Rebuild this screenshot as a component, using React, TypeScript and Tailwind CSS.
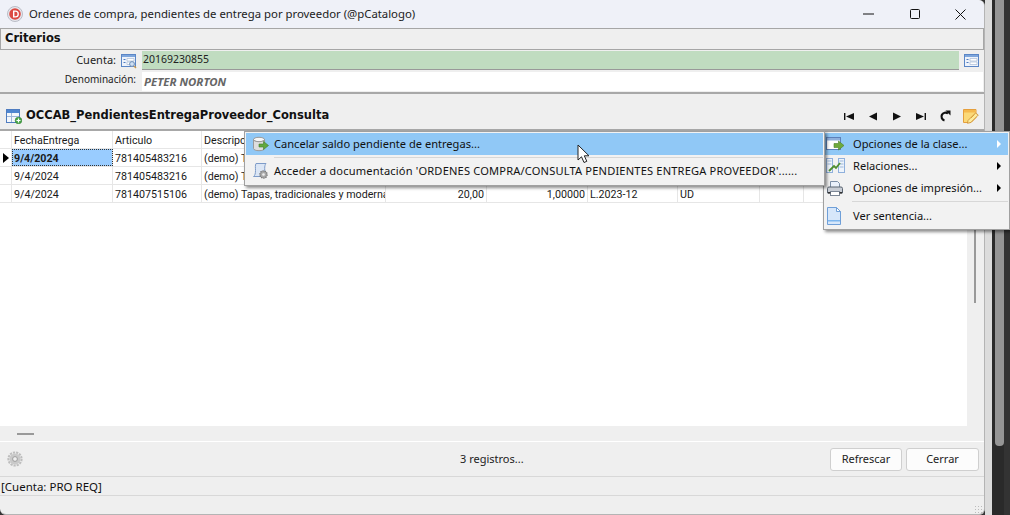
import React from "react";

const F = "font-['Noto_Sans',sans-serif]";

function AppLogo() {
  return (
    <svg width="16" height="16" viewBox="0 0 16 16">
      <circle cx="8" cy="8" r="7.500" fill="#e8e8ee" stroke="#b9bcc6" />
      <circle cx="8" cy="8" r="5.800" fill="#dc4a42" />
      <path d="M6 4.500h2.400a3.500 3.500 0 0 1 0 7H6z M7.400 5.800v4.400h1a2.200 2.200 0 0 0 0-4.400z" fill="#fff" fillRule="evenodd" />
    </svg>
  );
}

function FormIcon({ lens }: { lens?: boolean }) {
  return (
    <svg width="16" height="16" viewBox="0 0 16 16">
      <rect x="0.500" y="1.500" width="14" height="12" fill="#eef3fb" stroke="#5b86c6" />
      <rect x="1" y="2" width="13" height="2" fill="#7ea6dc" />
      <path d="M2.500 6.500h2M2.500 9.500h2" stroke="#4f7cc0" />
      <path d="M6 5.500h7v2.500H6zM6 9h7v2.500H6z" fill="#fff" stroke="#a9bcd6" strokeWidth="0.700" />
      {lens && <circle cx="11" cy="11" r="2.400" fill="#cfe0f4" stroke="#6f8fb8" />}
      {lens && <path d="M13 13l2 2" stroke="#c89a50" strokeWidth="1.500" />}
    </svg>
  );
}

function TableAddIcon() {
  return (
    <svg width="16" height="16" viewBox="0 0 16 16">
      <rect x="0.500" y="1.500" width="13" height="13" fill="#f4f7fb" stroke="#4f7cc0" />
      <rect x="1" y="2" width="12" height="3" fill="#4f86d0" />
      <path d="M5.500 5v9M1 8.500h12" stroke="#9db7da" />
      <circle cx="12.500" cy="12.500" r="3.300" fill="#4aa84a" stroke="#2f7d33" strokeWidth="0.600" />
      <path d="M12.500 10.500v4M10.500 12.500h4" stroke="#fff" strokeWidth="1.200" />
    </svg>
  );
}

function NavIcon({ kind }: { kind: "first" | "prev" | "next" | "last" }) {
  return (
    <svg width="12" height="9" viewBox="0 0 12 9" fill="#111">
      {kind === "first" && <path d="M1 1h1.400v7H1zM11 1v7L3 4.500z" />}
      {kind === "prev" && <path d="M10 0.500v8L2 4.500z" />}
      {kind === "next" && <path d="M2 0.500v8l8-4z" />}
      {kind === "last" && <path d="M9.600 1H11v7H9.600zM1 1v7l8-3.500z" />}
    </svg>
  );
}

function RedoIcon() {
  return (
    <svg width="12" height="12" viewBox="0 0 12 12" fill="none">
      <path d="M9 3.500A4 4 0 1 0 5.500 10.500" stroke="#111" strokeWidth="2.200" />
      <path d="M6.500 0.500h5v5z" fill="#111" />
    </svg>
  );
}

function NoteEditIcon() {
  return (
    <svg width="16" height="16" viewBox="0 0 16 16">
      <path d="M0.500 1.500h12.500v8l-5 5H0.500z" fill="#fbd978" stroke="#e59f3c" />
      <rect x="1" y="2" width="11.500" height="2.500" fill="#f5b94e" />
      <path d="M5 12.500l7.500-7.500 2.800 2-7.500 7.500-3.300.8z" fill="#fdeb9c" stroke="#c98a30" strokeWidth="0.800" />
      <path d="M8 10l3.500-3.500" stroke="#d9a040" />
    </svg>
  );
}

function DbArrowIcon() {
  return (
    <svg width="17" height="17" viewBox="0 0 17 17">
      <ellipse cx="7" cy="3.500" rx="5.500" ry="2.200" fill="#f7f7f7" stroke="#9a9a9a" />
      <path d="M1.500 3.500v9c0 1.300 2.500 2.200 5.500 2.200s5.500-.9 5.500-2.200v-9c0 1.300-2.500 2.200-5.500 2.200S1.500 4.800 1.500 3.500z" fill="#dedede" stroke="#9a9a9a" />
      <path d="M7 8h4.500V5.500l5 4-5 4V11H7z" fill="#62a83f" stroke="#3f7d2a" strokeWidth="0.600" />
    </svg>
  );
}

function ScrollGearIcon() {
  return (
    <svg width="18" height="18" viewBox="0 0 18 18">
      <path d="M5 1.500h10c-1 1-1.300 3-1.300 5 0 3 .3 6 0 8H2.500c1.500-1 2-3 2-6s-.5-5 .5-7z" fill="#dbe6f5" stroke="#7d9bc8" />
      <circle cx="12.500" cy="12.500" r="3.600" fill="#a8a8a8" stroke="#777" strokeDasharray="1.400 0.800" strokeWidth="1.400" />
      <circle cx="12.500" cy="12.500" r="1.300" fill="#eee" />
    </svg>
  );
}

function WindowArrowIcon() {
  return (
    <svg width="19" height="17" viewBox="0 0 19 17">
      <rect x="0.500" y="1.500" width="14" height="12" fill="#fff" stroke="#5d80b8" />
      <rect x="1" y="2" width="13" height="2.500" fill="#8fb0dc" />
      <path d="M8 7.500h4.500V5l5.500 4.500-5.500 4.500v-2.500H8z" fill="#6eaa3c" stroke="#4a8028" strokeWidth="0.600" />
    </svg>
  );
}

function RelationsIcon() {
  return (
    <svg width="19" height="16" viewBox="0 0 19 16">
      <rect x="0.500" y="0.500" width="6" height="14" fill="#eef4fb" stroke="#8fb0dc" />
      <rect x="12.500" y="0.500" width="6" height="14" fill="#eef4fb" stroke="#8fb0dc" />
      <path d="M1.500 3h4M1.500 6h4M13.500 3h4M13.500 6h4M13.500 9h4" stroke="#9db7da" />
      <path d="M3 13l5-5 2 2 4-5" fill="none" stroke="#4f8f30" strokeWidth="1.800" />
    </svg>
  );
}

function PrinterIcon() {
  return (
    <svg width="18" height="17" viewBox="0 0 18 17">
      <path d="M4.500 7V1.500h7l2 2V7" fill="#eaf1fb" stroke="#7c8ea6" />
      <path d="M1.500 13V8.500a1.500 1.500 0 0 1 1.500-1.500h12a1.500 1.500 0 0 1 1.500 1.500V13z" fill="#c7ccd4" stroke="#5a6470" />
      <rect x="4.500" y="11.500" width="9" height="4" fill="#fff" stroke="#7c8796" />
      <rect x="2" y="12" width="2.500" height="1.500" fill="#333" />
      <rect x="13.500" y="12" width="2.500" height="1.500" fill="#333" />
    </svg>
  );
}

function DocIcon() {
  return (
    <svg width="16" height="18" viewBox="0 0 16 18">
      <path d="M1.500 0.500h9l4 4v13h-13z" fill="#d7e7fa" stroke="#6f9fd8" />
      <path d="M10.500 0.500v4h4z" fill="#fff" stroke="#6f9fd8" />
      <path d="M2 13h12v1.500H2z" fill="#7db6ee" />
    </svg>
  );
}

function GearIcon() {
  return (
    <svg width="16" height="16" viewBox="0 0 16 16">
      <circle cx="8" cy="8" r="5.500" fill="#c9c9c9" />
      <circle cx="8" cy="8" r="6.600" fill="none" stroke="#bdbdbd" strokeWidth="2" strokeDasharray="2.200 1" />
      <circle cx="8" cy="8" r="2.400" fill="#efefef" stroke="#9d9d9d" />
    </svg>
  );
}

function CursorIcon() {
  return (
    <svg width="14" height="20" viewBox="0 0 14 20">
      <path d="M1 1v15l3.500-3.200 2.500 5.700 2.800-1.200-2.500-5.500H12z" fill="#fff" stroke="#222" strokeWidth="1" />
    </svg>
  );
}

const cols = ["w-[101px]", "w-[89px]", "w-[184px]", "w-[101px]", "w-[101px]", "w-[90px]", "w-[82px]", "w-[44px]"];

function Cell({ w, children, right, className = "" }: { w: string; children?: React.ReactNode; right?: boolean; className?: string }) {
  return (
    <div className={`${w} shrink-0 h-full border-r border-[#e6e6e6] px-[2px] overflow-hidden whitespace-nowrap leading-[19px] ${right ? "text-right" : ""} ${className}`}>
      {children}
    </div>
  );
}

const rows = [
  ["9/4/2024", "781405483216", "(demo) Tapas, tradicionales y modernas", "", "", "", ""],
  ["9/4/2024", "781405483216", "(demo) Tapas, tradicionales y modernas", "", "", "", ""],
  ["9/4/2024", "781407515106", "(demo) Tapas, tradicionales y modernas", "20,00", "1,00000", "L.2023-12", "UD"],
];

function Grid() {
  return (
    <div className="flex-1 flex min-h-0 border-t-2 border-[#a8a8a8]">
      <div className="flex-1 bg-white text-[10.700px] text-[#1a1a1a] font-['Roboto',sans-serif]">
        <div className="flex h-[18px] border-b border-[#e6e6e6]">
          <div className="w-[12px] shrink-0 border-r border-[#e6e6e6]" />
          <Cell w={cols[0]}>FechaEntrega</Cell>
          <Cell w={cols[1]}>Articulo</Cell>
          <Cell w={cols[2]}>Descripcion</Cell>
          <Cell w={cols[3]} />
          <Cell w={cols[4]} />
          <Cell w={cols[5]} />
          <Cell w={cols[6]} />
          <Cell w={cols[7]} />
        </div>
        {rows.map((r, i) => (
          <div key={i} className="flex h-[18px] border-b border-[#e6e6e6]">
            <div className="w-[12px] shrink-0 border-r border-[#e6e6e6] flex items-center justify-center">
              {i === 0 && <div className="w-0 h-0 border-y-[5px] border-y-transparent border-l-[6px] border-l-black" />}
            </div>
            <Cell w={cols[0]} className={i === 0 ? "bg-[#99ccff] font-bold outline-1 outline-dotted outline-[#333] -outline-offset-1" : ""}>{r[0]}</Cell>
            <Cell w={cols[1]}>{r[1]}</Cell>
            <Cell w={cols[2]}>{r[2]}</Cell>
            <Cell w={cols[3]} right>{r[3]}</Cell>
            <Cell w={cols[4]} right>{r[4]}</Cell>
            <Cell w={cols[5]}>{r[5]}</Cell>
            <Cell w={cols[6]}>{r[6]}</Cell>
            <Cell w={cols[7]} />
          </div>
        ))}
      </div>
      <div className="w-[17px] shrink-0 bg-[#efefef] pl-[7px]">
        <div className="w-[2px] h-[172px] bg-[#999]" />
      </div>
    </div>
  );
}

function MenuLeft() {
  return (
    <div className="absolute left-[244px] top-[131px] w-[581px] h-[55px] bg-[#f2f2f2] border border-[#a0a0a0] shadow-[2px_2px_3px_rgba(0,0,0,0.45)] px-[1px] pt-[1px] text-[11.100px] text-[#111] whitespace-nowrap">
      <div className="h-[22px] bg-[#90c8f6] flex items-center pl-[6px] gap-[5px]">
        <DbArrowIcon />
        <span>Cancelar saldo pendiente de entregas...</span>
      </div>
      <div className="h-[1px] mt-[2px] ml-[28px] bg-[#d7d7d7]" />
      <div className="h-[26px] flex items-center pl-[5px] gap-[5px]">
        <ScrollGearIcon />
        <span className="tracking-[0.170px]">Acceder a documentación 'ORDENES COMPRA/CONSULTA PENDIENTES ENTREGA PROVEEDOR'......</span>
      </div>
    </div>
  );
}

function MenuItem({ icon, label, active, arrow }: { icon: React.ReactNode; label: string; active?: boolean; arrow?: boolean }) {
  return (
    <div className={`h-[22px] flex items-center pl-[1px] pr-[7px] ${active ? "bg-[#90c8f6]" : ""}`}>
      <div className="w-[27px] shrink-0 flex items-center">{icon}</div>
      <span className="flex-1">{label}</span>
      {arrow && <div className={`w-0 h-0 border-y-[4px] border-y-transparent border-l-[4px] ${active ? "border-l-white" : "border-l-black"}`} />}
    </div>
  );
}

function MenuRight() {
  return (
    <div className="absolute left-[823px] top-[131px] w-[187px] h-[99px] bg-[#f2f2f2] border border-[#a0a0a0] shadow-[2px_2px_3px_rgba(0,0,0,0.45)] px-[1px] pt-[1px] text-[11.100px] text-[#111] whitespace-nowrap">
      <MenuItem icon={<WindowArrowIcon />} label="Opciones de la clase..." active arrow />
      <MenuItem icon={<RelationsIcon />} label="Relaciones..." arrow />
      <MenuItem icon={<PrinterIcon />} label="Opciones de impresión..." arrow />
      <div className="h-[1px] mt-[2px] mb-[3px] ml-[27px] bg-[#d7d7d7]" />
      <MenuItem icon={<DocIcon />} label="Ver sentencia..." />
    </div>
  );
}

export default function App() {
  return (
    <div className={`relative w-[1010px] h-[515px] overflow-hidden flex bg-[#333] ${F}`}>
      <div className="w-[985px] h-[515px] shrink-0 flex flex-col bg-[#efefef] rounded-b-[6px] rounded-tr-[6px] border-r border-b border-[#b4b4b4]">
        {/* title */}
        <div className="h-[28px] shrink-0 bg-[#eff1f8] rounded-tr-[6px] flex items-center pl-[7px] text-[11.350px] text-[#222] whitespace-nowrap">
          <AppLogo />
          <span className="ml-[6px]">Ordenes de compra, pendientes de entrega por proveedor (@pCatalogo)</span>
          <div className="ml-auto flex items-center">
            <svg className="mr-[36px]" width="11" height="2" viewBox="0 0 11 2"><path d="M0 1h11" stroke="#111" /></svg>
            <svg className="mr-[35px]" width="10" height="10" viewBox="0 0 10 10"><rect x="0.500" y="0.500" width="9" height="9" rx="1" fill="none" stroke="#111" /></svg>
            <svg className="mr-[18px]" width="11" height="11" viewBox="0 0 11 11"><path d="M0.500 0.500l10 10M10.500 0.500l-10 10" stroke="#111" /></svg>
          </div>
        </div>
        {/* Criterios */}
        <div className="h-[22px] shrink-0 bg-[#efefef] border border-[#a6a6a6] flex items-center pl-[4px] text-[11.500px] font-bold text-[#111] font-['DejaVu_Sans',sans-serif]">Criterios</div>
        {/* form */}
        <div className="h-[44px] shrink-0 border-b-2 border-[#a8a8a8] text-[#222] pt-[1px]">
          <div className="h-[19px] flex items-center">
            <div className="w-[116px] text-right shrink-0 text-[11px]">Cuenta:</div>
            <div className="w-[26px] shrink-0 flex justify-center"><FormIcon lens /></div>
            <div className="w-[817px] h-[19px] bg-[#c0dcc0] border-b border-[#999] leading-[17px] pl-[1px] text-[10.500px]">20169230855</div>
            <div className="ml-[5px]"><FormIcon /></div>
          </div>
          <div className="h-[20px] mt-[1px] flex items-center">
            <div className="w-[136px] text-right shrink-0 pb-[3px] text-[10px]">Denominación:</div>
            <div className="ml-[6px] w-[841px] h-[19px] bg-white pl-[2px] leading-[19px] text-[11.400px] font-bold italic text-[#666]">PETER NORTON</div>
          </div>
        </div>
        {/* grid title */}
        <div className="h-[35px] shrink-0 flex items-center pl-[6px] pt-[9px]">
          <TableAddIcon />
          <span className="ml-[4px] text-[11.500px] font-bold text-[#111] font-['DejaVu_Sans',sans-serif] whitespace-nowrap">OCCAB_PendientesEntregaProveedor_Consulta</span>
          <div className="ml-auto flex items-center gap-[12px] pr-[5px]">
            <NavIcon kind="first" />
            <NavIcon kind="prev" />
            <NavIcon kind="next" />
            <NavIcon kind="last" />
            <RedoIcon />
            <NoteEditIcon />
          </div>
        </div>
        <Grid />
        {/* splitter */}
        <div className="h-[16px] shrink-0 border-b border-white flex items-center pl-[17px]">
          <div className="w-[17px] h-[2px] bg-[#999]" />
        </div>
        {/* footer */}
        <div className="h-[35px] shrink-0 border-b border-[#d8d8d8] flex items-center pl-[7px] pr-[5px] text-[11px] text-[#222]">
          <GearIcon />
          <span className="ml-[437px]">3 registros...</span>
          <div className="ml-auto flex gap-[4px]">
            <button className="w-[72px] h-[23px] bg-[#fcfcfc] border border-[#cfcfcf] rounded-[3px]">Refrescar</button>
            <button className="w-[73px] h-[23px] bg-[#fcfcfc] border border-[#cfcfcf] rounded-[3px]">Cerrar</button>
          </div>
        </div>
        {/* status */}
        <div className="h-[19px] shrink-0 border-b border-[#d8d8d8] pl-[1px] text-[11.500px] leading-[20px] text-[#111]">[Cuenta: PRO REQ]</div>
        <div className="h-[18px] shrink-0 flex justify-end items-end pr-[2px] pb-[1px]">
          <div className="w-[8px] h-[8px] bg-[radial-gradient(#bbb_1px,transparent_1px)] bg-[length:3px_3px]" />
        </div>
      </div>
      {/* desktop strip */}
      <div className="w-[7px] shrink-0 bg-[#dcdcdc]" />
      <div className="w-[3px] shrink-0 bg-[#2a2a2a]" />
      <div className="w-[9px] shrink-0 h-full bg-[#2a2a2a]">
        <div className="w-[9px] h-[446px] bg-[#959595] rounded-b-[4px]" />
      </div>
      <div className="flex-1 bg-[#333]" />

      <MenuRight />
      <MenuLeft />
      <div className="absolute left-[577px] top-[144px]"><CursorIcon /></div>
    </div>
  );
}
